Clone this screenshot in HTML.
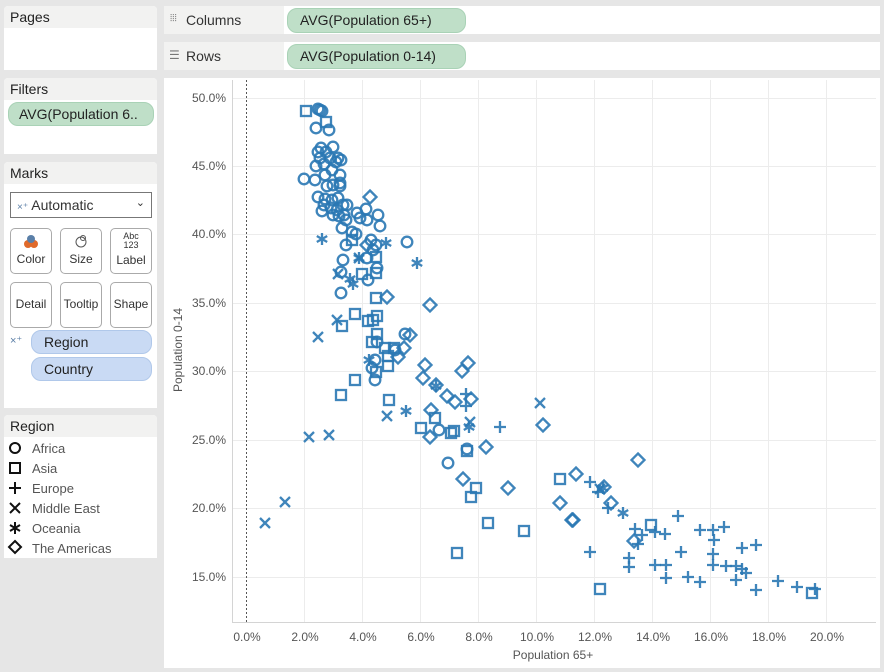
<!DOCTYPE html>
<html><head><meta charset="utf-8"><style>
*{box-sizing:border-box;margin:0;padding:0}
body{width:884px;height:672px;background:#e6e6e6;font-family:"Liberation Sans",sans-serif;position:relative;overflow:hidden;color:#333}
.panel{position:absolute;left:4px;width:153px;background:#fff;border-radius:4px 4px 0 0;overflow:hidden}
.ph{background:#f2f2f1;height:22px;font-size:14px;padding:3px 6px;color:#222}
.pill{position:absolute;border-radius:10px;font-size:14px;padding:3px 12px;white-space:nowrap;color:#222}
.g{background:#bfdfc8;border:1px solid #a9d2b6}
.b{background:#c9daf4;border:1px solid #b0c8ea}
.shelf{position:absolute;left:164px;width:716px;height:28px;background:#fff}
.shelf .lab{position:absolute;left:0;top:0;width:120px;height:28px;background:#f2f2f1;font-size:14px;padding:6px 0 0 22px}
.btn{position:absolute;width:42px;height:46px;border:1px solid #aaa;border-radius:5px;background:#fff;font-size:11px;text-align:center}
.leg{position:absolute;left:28px;font-size:13px;color:#555}
</style></head><body>
<div class="panel" style="top:6px;height:64px"><div class="ph">Pages</div></div>
<div class="panel" style="top:78px;height:76px"><div class="ph">Filters</div>
<div class="pill g" style="left:4px;top:24px;width:146px;padding-left:10px">AVG(Population 6..</div></div>
<div class="panel" style="top:162px;height:246px"><div class="ph">Marks</div>
<div style="position:absolute;left:6px;top:30px;width:142px;height:26px;border:1px solid #777;font-size:14px;padding:4px 0 0 6px"><span style="color:#5a7ea6;font-size:10px">×⁺</span> Automatic<span style="position:absolute;right:6px;top:3px;font-size:11px">&#8964;</span></div>
<div class="btn" style="left:6px;top:66px"><svg width="16" height="16" style="margin-top:4px"><circle cx="5" cy="11" r="4" fill="#e06a2b"/><circle cx="11" cy="11" r="4" fill="#e06a2b"/><circle cx="8" cy="6" r="4" fill="#5a7fa8"/></svg><div style="font-size:12px">Color</div></div>
<div class="btn" style="left:56px;top:66px"><svg width="16" height="16" style="margin-top:4px"><circle cx="8" cy="9" r="5" fill="none" stroke="#555"/><circle cx="10" cy="5" r="2.5" fill="none" stroke="#555"/></svg><div style="font-size:12px">Size</div></div>
<div class="btn" style="left:106px;top:66px"><div style="font-size:9px;line-height:9px;margin-top:3px">Abc<br>123</div><div style="font-size:12px;margin-top:3px">Label</div></div>
<div class="btn" style="left:6px;top:120px;padding-top:14px;font-size:12px">Detail</div>
<div class="btn" style="left:56px;top:120px;padding-top:14px;font-size:12px">Tooltip</div>
<div class="btn" style="left:106px;top:120px;padding-top:14px;font-size:12px">Shape</div>
<span style="position:absolute;left:6px;top:172px;color:#5a7ea6;font-size:11px">×⁺</span>
<div class="pill b" style="left:27px;top:168px;width:121px;height:24px">Region</div>
<div class="pill b" style="left:27px;top:195px;width:121px;height:24px">Country</div>
</div>
<div class="panel" style="top:415px;height:143px"><div class="ph">Region</div>
<svg style="position:absolute;left:0;top:0" width="30" height="143" fill="none" stroke="#111" stroke-width="2">
<circle cx="11" cy="33" r="5"/><rect x="6" y="48" width="10" height="10"/><path d="M5 73h12M11 67v12"/><path d="M6 88l10 10M16 88l-10 10"/><path d="M11 107v12M6 110l10 6M16 110l-10 6"/><path d="M11 126l6 6-6 6-6-6z"/></svg>
<div class="leg" style="top:26px">Africa</div><div class="leg" style="top:46px">Asia</div><div class="leg" style="top:66px">Europe</div><div class="leg" style="top:86px">Middle East</div><div class="leg" style="top:106px">Oceania</div><div class="leg" style="top:126px">The Americas</div>
</div>
<div class="shelf" style="top:6px"><div class="lab"><span style="position:absolute;left:6px;top:7px;font-size:10px;color:#777">⦙⦙⦙</span>Columns</div><div class="pill g" style="left:123px;top:2px;width:179px;height:25px">AVG(Population 65+)</div></div>
<div class="shelf" style="top:42px"><div class="lab"><span style="position:absolute;left:5px;top:6px;font-size:12px;color:#777">☰</span>Rows</div><div class="pill g" style="left:123px;top:2px;width:179px;height:25px">AVG(Population 0-14)</div></div>
<svg style="position:absolute;left:164px;top:78px" width="716" height="590" viewBox="164 78 716 590">
<rect x="164" y="78" width="716" height="590" fill="#fff"/>
<g stroke="#ececec" stroke-width="1">
<path d="M304.5 80v542M362.5 80v542M420.5 80v542M478.5 80v542M536.5 80v542M594.5 80v542M652.5 80v542M710.5 80v542M768.5 80v542M826.5 80v542"/>
<path d="M232 98.5h644M232 166.5h644M232 234.5h644M232 303.5h644M232 371.5h644M232 440.5h644M232 508.5h644M232 577.5h644"/>
</g>
<path d="M232.5 80v542.5H876" fill="none" stroke="#d4d4d4"/>
<path d="M246.5 80v542" stroke="#555" stroke-dasharray="2,2"/>
<g font-size="12" fill="#555" text-anchor="end">
<text x="226" y="102">50.0%</text><text x="226" y="170">45.0%</text><text x="226" y="238">40.0%</text><text x="226" y="307">35.0%</text><text x="226" y="375">30.0%</text><text x="226" y="444">25.0%</text><text x="226" y="512">20.0%</text><text x="226" y="581">15.0%</text></g>
<g font-size="12" fill="#555" text-anchor="middle">
<text x="247" y="641">0.0%</text><text x="305" y="641">2.0%</text><text x="363" y="641">4.0%</text><text x="421" y="641">6.0%</text><text x="479" y="641">8.0%</text><text x="537" y="641">10.0%</text><text x="595" y="641">12.0%</text><text x="653" y="641">14.0%</text><text x="711" y="641">16.0%</text><text x="769" y="641">18.0%</text><text x="827" y="641">20.0%</text>
<text x="553" y="659">Population 65+</text>
<text transform="translate(182 350) rotate(-90)">Population 0-14</text></g>
<defs>
<circle id="o" r="5.3"/><rect id="s" x="-5" y="-5" width="10" height="10"/><path id="p" d="M-6 0h12M0-6v12"/><path id="x" d="M-5-5l10 10M5-5l-10 10"/><path id="a" d="M0-6v12M-5.2-3l10.4 6M5.2-3l-10.4 6"/><path id="d" d="M0-6.5l6.5 6.5-6.5 6.5-6.5-6.5z"/>
</defs>
<g fill="none" stroke="#2a78b4" stroke-width="2.3" stroke-opacity="0.9">
<use href="#o" x="318" y="109"/><use href="#o" x="320" y="110"/><use href="#o" x="322" y="111"/><use href="#o" x="316" y="128"/><use href="#o" x="329" y="130"/><use href="#o" x="321" y="148"/><use href="#o" x="318" y="152"/><use href="#o" x="326" y="152"/><use href="#o" x="333" y="147"/><use href="#o" x="320" y="158"/><use href="#o" x="330" y="158"/><use href="#o" x="338" y="158"/><use href="#o" x="324" y="164"/><use href="#o" x="336" y="162"/><use href="#o" x="341" y="160"/><use href="#o" x="332" y="170"/><use href="#o" x="340" y="175"/><use href="#o" x="316" y="166"/><use href="#o" x="315" y="180"/><use href="#o" x="325" y="175"/><use href="#o" x="327" y="186"/><use href="#o" x="333" y="185"/><use href="#o" x="340" y="186"/><use href="#o" x="304" y="179"/><use href="#o" x="318" y="197"/><use href="#o" x="325" y="199"/><use href="#o" x="332" y="200"/><use href="#o" x="338" y="198"/><use href="#o" x="340" y="183"/><use href="#o" x="324" y="205"/><use href="#o" x="331" y="208"/><use href="#o" x="337" y="210"/><use href="#o" x="333" y="215"/><use href="#o" x="339" y="216"/><use href="#o" x="344" y="215"/><use href="#o" x="322" y="211"/><use href="#o" x="343" y="205"/><use href="#o" x="347" y="205"/><use href="#o" x="346" y="220"/><use href="#o" x="342" y="228"/><use href="#o" x="352" y="232"/><use href="#o" x="356" y="234"/><use href="#o" x="346" y="245"/><use href="#o" x="343" y="260"/><use href="#o" x="341" y="272"/><use href="#o" x="341" y="293"/><use href="#o" x="357" y="213"/><use href="#o" x="366" y="209"/><use href="#o" x="360" y="218"/><use href="#o" x="367" y="220"/><use href="#o" x="378" y="215"/><use href="#o" x="380" y="226"/><use href="#o" x="371" y="240"/><use href="#o" x="376" y="245"/><use href="#o" x="407" y="242"/><use href="#o" x="373" y="250"/><use href="#o" x="367" y="258"/><use href="#o" x="377" y="268"/><use href="#o" x="368" y="280"/><use href="#o" x="405" y="334"/><use href="#o" x="377" y="342"/><use href="#o" x="375" y="360"/><use href="#o" x="372" y="368"/><use href="#o" x="375" y="380"/><use href="#o" x="395" y="350"/><use href="#o" x="439" y="430"/><use href="#o" x="448" y="463"/><use href="#o" x="467" y="449"/>
<use href="#s" x="306" y="111"/><use href="#s" x="326" y="122"/><use href="#s" x="352" y="240"/><use href="#s" x="376" y="257"/><use href="#s" x="376" y="273"/><use href="#s" x="362" y="274"/><use href="#s" x="376" y="298"/><use href="#s" x="355" y="314"/><use href="#s" x="342" y="326"/><use href="#s" x="368" y="321"/><use href="#s" x="373" y="320"/><use href="#s" x="377" y="316"/><use href="#s" x="377" y="334"/><use href="#s" x="372" y="342"/><use href="#s" x="385" y="348"/><use href="#s" x="394" y="348"/><use href="#s" x="388" y="356"/><use href="#s" x="388" y="366"/><use href="#s" x="376" y="372"/><use href="#s" x="355" y="380"/><use href="#s" x="389" y="400"/><use href="#s" x="341" y="395"/><use href="#s" x="421" y="428"/><use href="#s" x="435" y="418"/><use href="#s" x="451" y="433"/><use href="#s" x="454" y="431"/><use href="#s" x="467" y="451"/><use href="#s" x="471" y="497"/><use href="#s" x="476" y="488"/><use href="#s" x="457" y="553"/><use href="#s" x="488" y="523"/><use href="#s" x="524" y="531"/><use href="#s" x="560" y="479"/><use href="#s" x="600" y="589"/><use href="#s" x="812" y="593"/><use href="#s" x="651" y="525"/>
<use href="#d" x="370" y="197"/><use href="#d" x="367" y="245"/><use href="#d" x="387" y="297"/><use href="#d" x="430" y="305"/><use href="#d" x="410" y="335"/><use href="#d" x="404" y="348"/><use href="#d" x="398" y="357"/><use href="#d" x="425" y="365"/><use href="#d" x="423" y="378"/><use href="#d" x="436" y="385"/><use href="#d" x="462" y="371"/><use href="#d" x="468" y="363"/><use href="#d" x="471" y="399"/><use href="#d" x="447" y="396"/><use href="#d" x="455" y="402"/><use href="#d" x="430" y="437"/><use href="#d" x="431" y="410"/><use href="#d" x="486" y="447"/><use href="#d" x="463" y="479"/><use href="#d" x="508" y="488"/><use href="#d" x="543" y="425"/><use href="#d" x="560" y="503"/><use href="#d" x="576" y="474"/><use href="#d" x="573" y="520"/><use href="#d" x="604" y="487"/><use href="#d" x="611" y="503"/><use href="#d" x="638" y="460"/><use href="#d" x="634" y="541"/><use href="#d" x="572" y="520"/>
<use href="#p" x="466" y="394"/><use href="#p" x="466" y="406"/><use href="#p" x="500" y="427"/><use href="#p" x="590" y="552"/><use href="#p" x="598" y="492"/><use href="#p" x="590" y="482"/><use href="#p" x="608" y="508"/><use href="#p" x="635" y="529"/><use href="#p" x="629" y="558"/><use href="#p" x="629" y="567"/><use href="#p" x="638" y="544"/><use href="#p" x="642" y="535"/><use href="#p" x="655" y="532"/><use href="#p" x="665" y="534"/><use href="#p" x="655" y="565"/><use href="#p" x="666" y="578"/><use href="#p" x="666" y="565"/><use href="#p" x="678" y="516"/><use href="#p" x="681" y="552"/><use href="#p" x="700" y="530"/><use href="#p" x="688" y="577"/><use href="#p" x="700" y="582"/><use href="#p" x="713" y="530"/><use href="#p" x="713" y="554"/><use href="#p" x="713" y="565"/><use href="#p" x="714" y="540"/><use href="#p" x="724" y="527"/><use href="#p" x="726" y="566"/><use href="#p" x="736" y="566"/><use href="#p" x="742" y="569"/><use href="#p" x="736" y="580"/><use href="#p" x="742" y="548"/><use href="#p" x="746" y="573"/><use href="#p" x="756" y="545"/><use href="#p" x="756" y="590"/><use href="#p" x="778" y="581"/><use href="#p" x="797" y="587"/><use href="#p" x="815" y="589"/>
<use href="#x" x="265" y="523"/><use href="#x" x="285" y="502"/><use href="#x" x="309" y="437"/><use href="#x" x="329" y="435"/><use href="#x" x="318" y="337"/><use href="#x" x="337" y="320"/><use href="#x" x="338" y="274"/><use href="#x" x="359" y="258"/><use href="#x" x="387" y="416"/><use href="#x" x="470" y="422"/><use href="#x" x="540" y="403"/><use href="#x" x="600" y="489"/>
<use href="#a" x="322" y="239"/><use href="#a" x="386" y="243"/><use href="#a" x="417" y="263"/><use href="#a" x="353" y="284"/><use href="#a" x="359" y="258"/><use href="#a" x="369" y="360"/><use href="#a" x="406" y="411"/><use href="#a" x="436" y="386"/><use href="#a" x="469" y="427"/><use href="#a" x="623" y="513"/><use href="#a" x="603" y="488"/><use href="#a" x="350" y="279"/>
</g>
</svg>
</body></html>
